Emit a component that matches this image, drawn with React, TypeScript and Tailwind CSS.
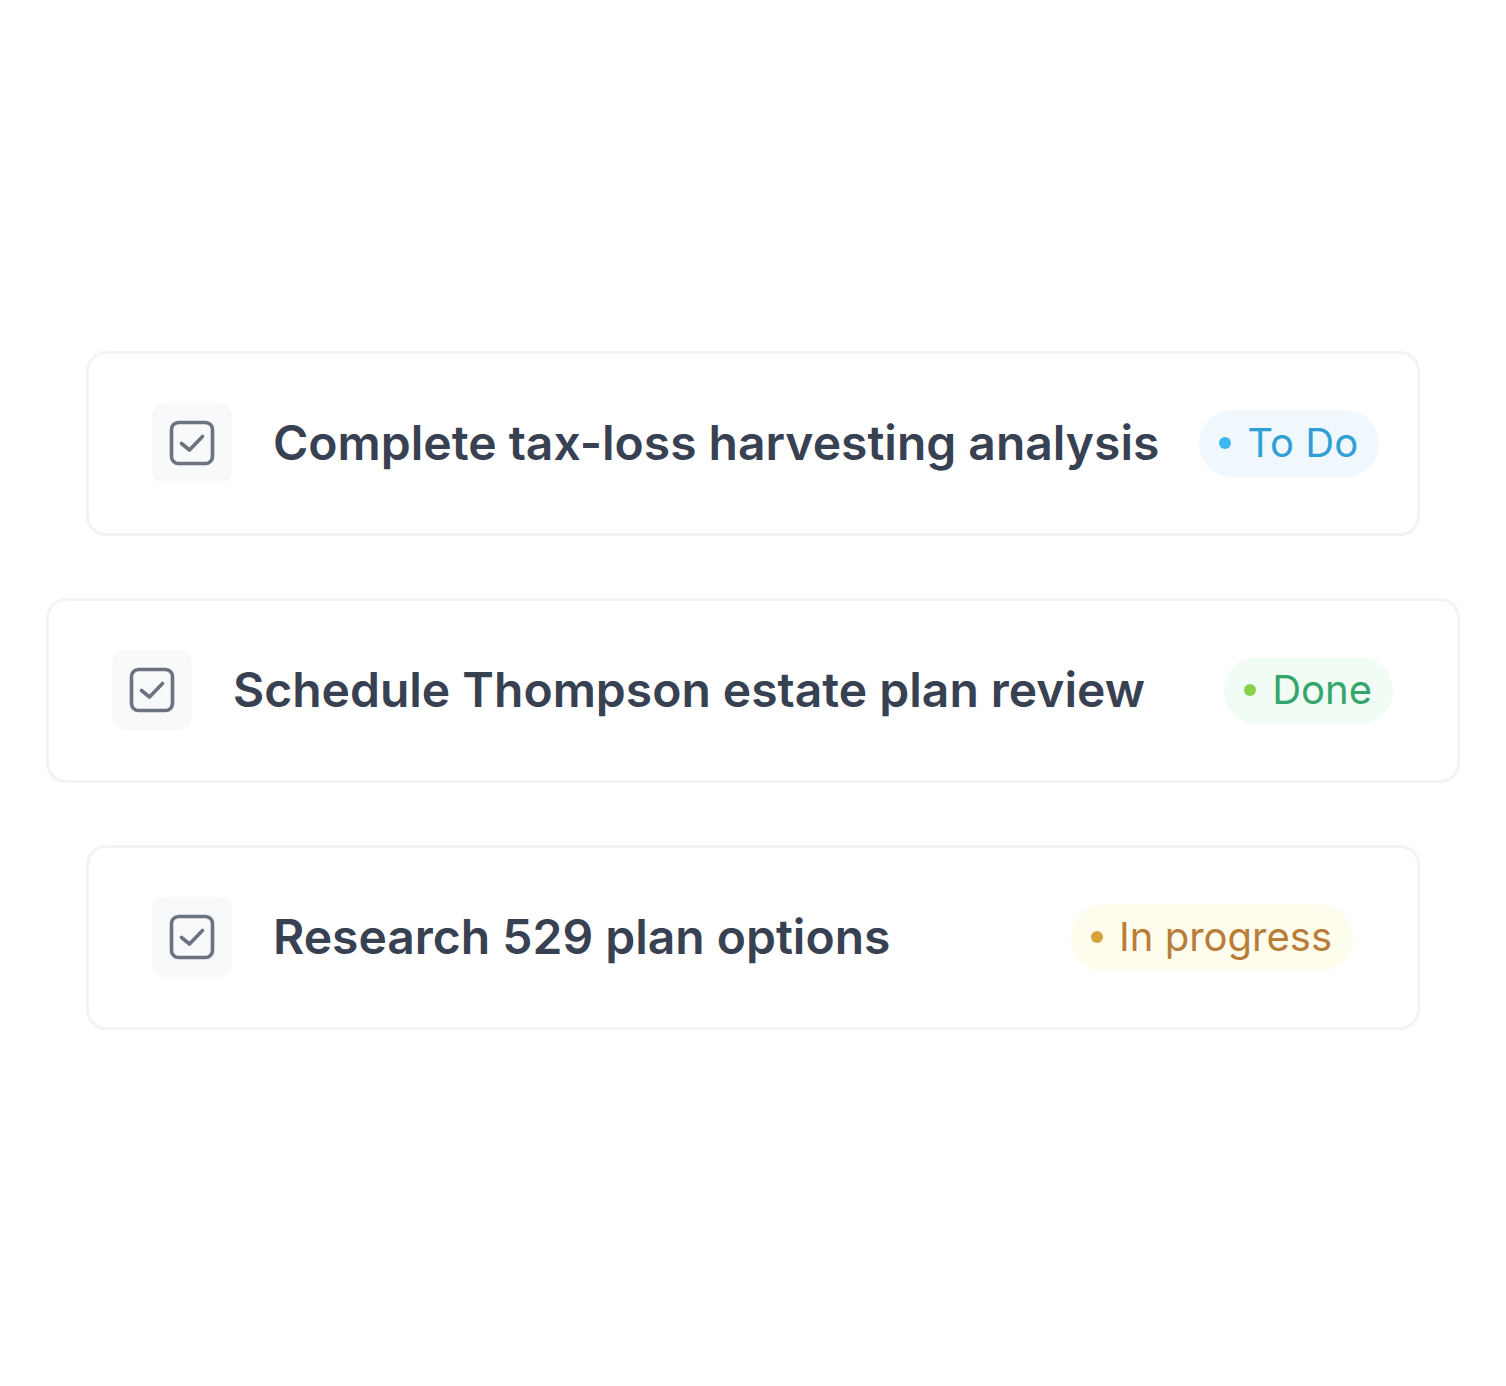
type Status = 'todo' | 'done' | 'progress';

interface Task {
  title: string;
  status: Status;
  wide?: boolean;
}

const tasks: Task[] = [
  { title: 'Complete tax-loss harvesting analysis', status: 'todo' },
  { title: 'Schedule Thompson estate plan review', status: 'done', wide: true },
  { title: 'Research 529 plan options', status: 'progress' },
];

function CheckIcon() {
  return (
    <svg width="46" height="46" viewBox="0 0 46 46" fill="none">
      <rect x="2.5" y="2.5" width="41" height="41" rx="7" stroke="#6b7280" strokeWidth="3.6" />
      <path d="M12.5 23.5 L20.5 30 L33.5 16.5" stroke="#6b7280" strokeWidth="3.6" strokeLinecap="round" strokeLinejoin="round" />
    </svg>
  );
}

function StatusBadge({ status }: { status: Status }) {
  if (status === 'todo') {
    return (
      <div className="flex h-[67px] shrink-0 items-center gap-4 rounded-full bg-[#f0f8fe] pl-5 pr-[21px] text-[40px] text-[#2f9fd6]">
        <span className="h-3 w-3 rounded-full bg-[#3cb8f0]" />
        To Do
      </div>
    );
  }
  if (status === 'done') {
    return (
      <div className="flex h-[67px] shrink-0 items-center gap-4 rounded-full bg-[#f0fcf4] pl-5 pr-[21px] text-[40px] text-[#35a56c]">
        <span className="h-3 w-3 rounded-full bg-[#8ad14a]" />
        Done
      </div>
    );
  }
  return (
    <div className="flex h-[67px] shrink-0 items-center gap-4 rounded-full bg-[#fefcec] pl-5 pr-[21px] text-[40px] text-[#b87d38]">
      <span className="h-3 w-3 rounded-full bg-[#d7a238]" />
      In progress
    </div>
  );
}

function TaskCard({ task }: { task: Task }) {
  return (
    <div
      className={`flex h-[185px] items-center justify-between gap-10 rounded-[20px] border-[3px] border-[#f2f3f5] bg-white pl-[63px] pr-16 ${
        task.wide ? 'w-[1414px]' : 'w-[1334px]'
      }`}
    >
      <div className="flex shrink-0 items-center gap-[41px]">
        <div className="flex h-20 w-20 shrink-0 items-center justify-center rounded-xl bg-[#f8f9fb]">
          <CheckIcon />
        </div>
        <span className="whitespace-nowrap text-[48px] font-semibold text-[#374151]">
          {task.title}
        </span>
      </div>
      <StatusBadge status={task.status} />
    </div>
  );
}

export default function App() {
  return (
    <div
      className="flex h-[1386px] w-full flex-col items-center justify-center gap-[62px] bg-white pb-[6px]"
      style={{ fontFamily: 'Inter, "Noto Sans", sans-serif' }}
    >
      {tasks.map((t) => (
        <TaskCard key={t.title} task={t} />
      ))}
    </div>
  );
}
